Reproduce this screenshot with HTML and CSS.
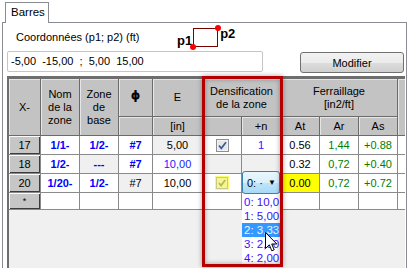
FILE: index.html
```html
<!DOCTYPE html>
<html lang="fr">
<head>
    <meta charset="UTF-8">
    <title>Barres</title>
    <link rel="stylesheet" href="styles.css">
</head>
<body>
    <div class="tabs"><div class="tab">Barres</div></div>
    <div class="panel">
        <div class="coords">
            <span class="coords-label">Coordonnées (p1; p2) (ft)</span>
            <div class="pts">
                <span class="p1">p1</span>
                <span class="pt-box"><i class="dot dot-a"></i><i class="dot dot-b"></i></span>
                <span class="p2">p2</span>
            </div>
        </div>
        <div class="entry">
            <div class="field">-5,00  -15,00  ;  5,00  15,00</div>
            <button class="btn">Modifier</button>
        </div>
        <div class="grid-wrap">
            <div class="grid">
                <!-- en-tetes -->
                <div class="h r2">X-</div>
                <div class="h r2">Nom<br>de la<br>zone</div>
                <div class="h r2">Zone<br>de<br>base</div>
                <div class="h phi">&#981;</div>
                <div class="h">E</div>
                <div class="h c2">Densification<br>de la zone</div>
                <div class="h c3">Ferraillage<br>[in2/ft]</div>
                <div class="h r2"></div>
                <div class="h"></div>
                <div class="h">[in]</div>
                <div class="h"></div>
                <div class="h">+n</div>
                <div class="h">At</div>
                <div class="h">Ar</div>
                <div class="h">As</div>

                <!-- ligne 17 -->
                <div class="rh">17</div>
                <div class="c b">1/1-</div>
                <div class="c b">1/2-</div>
                <div class="c b">#7</div>
                <div class="c g">5,00</div>
                <div class="c">
                    <svg class="chk" width="13" height="13" viewBox="0 0 13 13">
                        <rect x="0.5" y="0.5" width="12" height="12" fill="#f4f4f4" stroke="#8e8f8f"/>
                        <rect x="2" y="2" width="9" height="9" fill="#e6e7e9"/>
                        <path d="M3 6.5 L5.3 9.3 L10 3.2" fill="none" stroke="#3a5a98" stroke-width="1.7"/>
                    </svg>
                </div>
                <div class="c v">1</div>
                <div class="c">0.56</div>
                <div class="c gr">1,44</div>
                <div class="c gr">+0.88</div>
                <div class="c"></div>

                <!-- ligne 18 -->
                <div class="rh">18</div>
                <div class="c b">1/2-</div>
                <div class="c g b">---</div>
                <div class="c b">#7</div>
                <div class="c bl">10,00</div>
                <div class="c g"></div>
                <div class="c g"></div>
                <div class="c">0.32</div>
                <div class="c gr">0,72</div>
                <div class="c gr">+0.40</div>
                <div class="c"></div>

                <!-- ligne 20 -->
                <div class="rh">20</div>
                <div class="c b">1/20-</div>
                <div class="c b">1/2-</div>
                <div class="c g">#7</div>
                <div class="c">10,00</div>
                <div class="c">
                    <svg class="chk" width="14" height="14" viewBox="0 0 14 14">
                        <rect x="0" y="0" width="14" height="14" fill="#fbfb70"/>
                        <rect x="1.5" y="1.5" width="11" height="11" fill="#f6f690" stroke="#c9c98a"/>
                        <path d="M4 7 L6 9.6 L10.2 4" fill="none" stroke="#b5b55a" stroke-width="1.6"/>
                    </svg>
                </div>
                <div class="c"></div>
                <div class="c y">0.00</div>
                <div class="c gr">0,72</div>
                <div class="c gr">+0.72</div>
                <div class="c"></div>

                <!-- nouvelle ligne -->
                <div class="rh star">*</div>
                <div class="c"></div>
                <div class="c"></div>
                <div class="c"></div>
                <div class="c"></div>
                <div class="c"></div>
                <div class="c"></div>
                <div class="c"></div>
                <div class="c"></div>
                <div class="c"></div>
                <div class="c"></div>
            </div>
        </div>
    </div>

    <!-- liste deroulante ouverte -->
    <div class="combo"><span>0: &middot;</span><span class="arrow">&#9660;</span></div>
    <ul class="options">
        <li>0: 10,0</li>
        <li>1: 5,00</li>
        <li class="sel">2: 3,33</li>
        <li>3: 2,50</li>
        <li>4: 2,00</li>
    </ul>
    <svg class="cursor" width="13" height="21" viewBox="0 0 13 21">
        <path d="M0.5 0.5 L0.5 16.5 L4.3 12.8 L6.8 18.8 L9.2 17.8 L6.7 12 L11.8 12 Z" fill="#fff" stroke="#000" stroke-width="1"/>
    </svg>

    <!-- cadre rouge -->
    <div class="focus"></div>
</body>
</html>
```
FILE: styles.css
```css
body {
    margin: 0;
    width: 409px;
    height: 268px;
    overflow: hidden;
    position: relative;
    background: #fff;
    font-family: "Liberation Sans", Arial, sans-serif;
    font-size: 11px;
    color: #000;
}
.tabs {
    display: flex;
    height: 20px;
    padding: 2px 0 0 5px;
}
.tab {
    box-sizing: border-box;
    width: 44px;
    height: 21px;
    margin-bottom: -1px;
    border: 1px solid #898c95;
    border-bottom: none;
    background: #fff;
    position: relative;
    z-index: 1;
    padding: 3px 0 0 5px;
    font-size: 11.5px;
}
.panel {
    box-sizing: border-box;
    width: 405px;
    height: 246px;
    margin-left: 2px;
    border: 1px solid #898c95;
    border-bottom: none;
    background: #fff;
    overflow: hidden;
}
.coords {
    display: flex;
    align-items: center;
    height: 28px;
}
.coords-label {
    width: 161px;
    padding-left: 13px;
    font-size: 11px;
}
.pts {
    display: flex;
    height: 19px;
    margin-top: 1px;
}
.p1, .p2 {
    font-weight: bold;
    font-size: 13px;
    line-height: 12px;
}
.p1 { align-self: flex-end; margin-right: 1px; }
.p2 { align-self: flex-start; margin-left: 2px; }
.pt-box {
    box-sizing: border-box;
    width: 25px;
    height: 19px;
    border: 1px solid #7a0000;
    position: relative;
}
.dot {
    position: absolute;
    width: 6px;
    height: 6px;
    border-radius: 50%;
    background: #f00;
}
.dot-a { left: -4px; bottom: -4px; }
.dot-b { right: -4px; top: -4px; }
.entry {
    display: flex;
    align-items: flex-start;
    height: 25px;
}
.field {
    box-sizing: border-box;
    width: 256px;
    height: 21px;
    margin-left: 4px;
    padding: 3px 0 0 3px;
    border: 1px solid #c5c5c5;
    border-radius: 2px;
    white-space: pre;
}
.btn {
    box-sizing: border-box;
    width: 104px;
    height: 21px;
    margin: 1px 0 0 37px;
    border: 1px solid #707070;
    border-radius: 3px;
    background: linear-gradient(#f2f2f2 0%, #ebebeb 50%, #dddddd 51%, #cfcfcf 100%);
    font-family: inherit;
    font-size: 11px;
    padding: 0;
}
.grid-wrap {
    box-sizing: border-box;
    width: 398px;
    height: 192px;
    margin-left: 4px;
    border-top: 3px solid #6e6e6e;
    border-left: 2px solid #6e6e6e;
    background: #f0f0f0;
    overflow: hidden;
}
.grid {
    display: grid;
    grid-template-columns: 32px 39px 39px 34px 50px 39px 39px 39px 39px 39px 20px;
    grid-template-rows: 38px 19px 19px 19px 19px 17px;
    width: 409px;
}
.grid > div {
    box-sizing: border-box;
    display: flex;
    align-items: center;
    justify-content: center;
    text-align: center;
    line-height: 13px;
}
.h {
    background: #c3c3c3;
    border-right: 1px solid #6b6b6b;
    border-bottom: 1px solid #6b6b6b;
    box-shadow: inset 1px 1px 0 #e6e6e6;
}
.r2 { grid-row: span 2; }
.c2 { grid-column: span 2; }
.c3 { grid-column: span 3; }
.phi {
    font-family: "DejaVu Sans", sans-serif;
    font-weight: bold;
    font-size: 12px;
    padding-bottom: 5px;
}
.rh {
    background: #c6c6c6;
    border-right: 1px solid #8a8a8a;
    border-bottom: 1px solid #8a8a8a;
    box-shadow: inset 1px 1px 0 #fafafa, inset -1px -1px 0 #3c3c3c;
}
.star {
    font-size: 9px;
    align-items: flex-start !important;
    padding-top: 2px;
}
.c {
    background: #fff;
    border-right: 1px solid #8a8a8a;
    border-bottom: 1px solid #8a8a8a;
}
.g { background: #f0f0f0; }
.y { background: #ffff00; }
.b { color: #0000ff; font-weight: bold; }
.bl { color: #1a1aff; }
.gr { color: #008000; }
.v { color: #3a10ff; }
.chk { display: block; }
.combo {
    position: absolute;
    left: 242px;
    top: 171px;
    box-sizing: border-box;
    width: 38px;
    height: 23px;
    border: 1px solid #3c7fb1;
    border-radius: 3px;
    background: linear-gradient(#eaf6fd 0%, #d9f0fc 50%, #bee6fd 51%, #a7d9f5 100%);
    display: flex;
    align-items: center;
    justify-content: space-between;
    padding: 0 3px 0 4px;
    font-size: 11px;
}
.arrow { font-size: 8px; }
.options {
    position: absolute;
    left: 242px;
    top: 194px;
    width: 38px;
    height: 72px;
    margin: 0;
    padding: 1px 0 0;
    list-style: none;
    background: #fff;
    overflow: hidden;
    box-sizing: border-box;
}
.options li {
    height: 14px;
    line-height: 14px;
    padding-left: 2px;
    color: #3a10ff;
    white-space: nowrap;
    font-size: 11.5px;
}
.options li.sel {
    background: #3399ff;
    color: #eef4ff;
}
.cursor {
    position: absolute;
    left: 265px;
    top: 232px;
}
.focus {
    position: absolute;
    left: 202px;
    top: 76px;
    box-sizing: border-box;
    width: 81px;
    height: 191px;
    border: 3px solid #b40000;
    box-shadow: 0 0 5px rgba(0,0,0,0.35), inset 0 0 5px rgba(0,0,0,0.35);
}
```
